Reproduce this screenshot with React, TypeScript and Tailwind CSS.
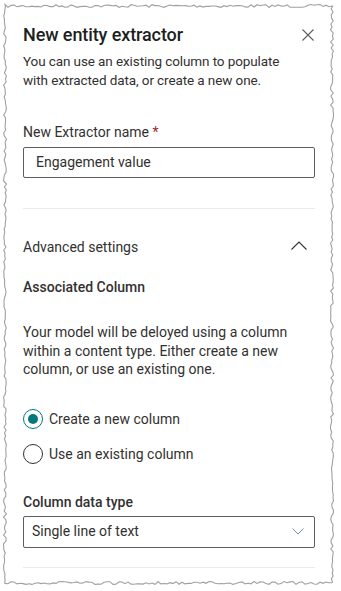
import React from "react";

function makeFrame(): string {
  let seed = 7;
  const rnd = () => {
    seed = (seed * 16807) % 2147483647;
    return (seed - 1) / 2147483646;
  };
  const L = 5, T = 6, R = 332, B = 583;
  const pts: [number, number][] = [];
  const j = () => (rnd() - 0.5) * 3;
  for (let x = L; x <= R; x += 3) pts.push([x, T + j()]);
  for (let y = T; y <= B; y += 3) pts.push([R + j(), y]);
  for (let x = R; x >= L; x -= 3) pts.push([x, B + j()]);
  for (let y = B; y >= T; y -= 3) pts.push([L + j(), y]);
  return "M" + pts.map((p) => `${p[0].toFixed(1)},${p[1].toFixed(1)}`).join(" L") + " Z";
}

const framePath = makeFrame();

function Radio({ checked, label }: { checked: boolean; label: string }) {
  return (
    <div className="flex items-center h-[20px]">
      <div
        className={
          checked
            ? "w-[20px] h-[20px] rounded-full border border-[#03787c] flex items-center justify-center"
            : "w-[20px] h-[20px] rounded-full border border-[#323130]"
        }
      >
        {checked && <div className="w-[10px] h-[10px] rounded-full bg-[#03787c]" />}
      </div>
      <span className="ml-[6px] text-[14px] leading-5 text-[#323130]">{label}</span>
    </div>
  );
}

export default function App() {
  return (
    <div
      className="relative w-[341px] h-[591px] bg-white overflow-hidden"
      style={{ fontFamily: 'Roboto, "Open Sans", sans-serif' }}
    >
      <svg className="absolute inset-0 pointer-events-none" width="341" height="591">
        <path d={framePath} fill="none" stroke="#a0a0a0" strokeWidth="1.1" />
      </svg>
      <div className="pl-[23px] pr-[26px] pt-[21px]">
        <div className="flex items-center justify-between h-[28px]">
          <h1 className="text-[18px] leading-[28px] font-medium text-[#201f1e] tracking-[-0.1px]">
            New entity extractor
          </h1>
          <svg width="12" height="12" viewBox="0 0 12 12" className="mr-[1px] mt-[-1px]">
            <path d="M0.5 0.5 L11.5 11.5 M11.5 0.5 L0.5 11.5" stroke="#605e5c" strokeWidth="1.1" />
          </svg>
        </div>
        <p className="mt-[3px] max-w-[268px] text-[13.5px] leading-[18.5px] text-[#323130] tracking-[-0.1px]">
          You can use an existing column to populate with extracted data, or create a new one.
        </p>
        <div className="mt-[33px] text-[14px] leading-5 text-[#323130]">
          New Extractor name <span className="text-[#a4262c]">*</span>
        </div>
        <div className="mt-[5px] h-[31px] border border-[#605e5c] rounded-[2px] flex items-center pl-[12px] text-[14px] text-[#323130]">
          Engagement value
        </div>
        <div className="mt-[30px] h-px bg-[#edebe9]" />
        <div className="mt-[23px] h-[30px] flex items-center justify-between">
          <span className="text-[14px] text-[#323130]">Advanced settings</span>
          <svg width="16" height="9" viewBox="0 0 16 9" className="mr-[8px] mb-[4px]">
            <path d="M0.5 8.5 L8 1 L15.5 8.5" fill="none" stroke="#323130" strokeWidth="1.1" />
          </svg>
        </div>
        <div className="mt-[15px] text-[14px] leading-5 font-medium text-[#323130]">
          Associated Column
        </div>
        <p className="mt-[26px] text-[14px] leading-[18.5px] text-[#323130]">
          Your model will be deloyed using a column within a content type. Either create a new
          column, or use an existing one.
        </p>
        <div className="mt-[30px]">
          <Radio checked label="Create a new column" />
        </div>
        <div className="mt-[15px]">
          <Radio checked={false} label="Use an existing column" />
        </div>
        <div className="mt-[28px] text-[14px] leading-5 font-medium text-[#323130]">
          Column data type
        </div>
        <div className="mt-[4px] h-[32px] border border-[#605e5c] rounded-[2px] flex items-center justify-between pl-[8px] pr-[10px]">
          <span className="text-[14px] text-[#323130]">Single line of text</span>
          <svg width="12" height="7" viewBox="0 0 12 7">
            <path d="M0.5 0.5 L6 6 L11.5 0.5" fill="none" stroke="#6b8fb8" strokeWidth="1" />
          </svg>
        </div>
        <div className="mt-[19px] h-px bg-[#edebe9]" />
      </div>
    </div>
  );
}
